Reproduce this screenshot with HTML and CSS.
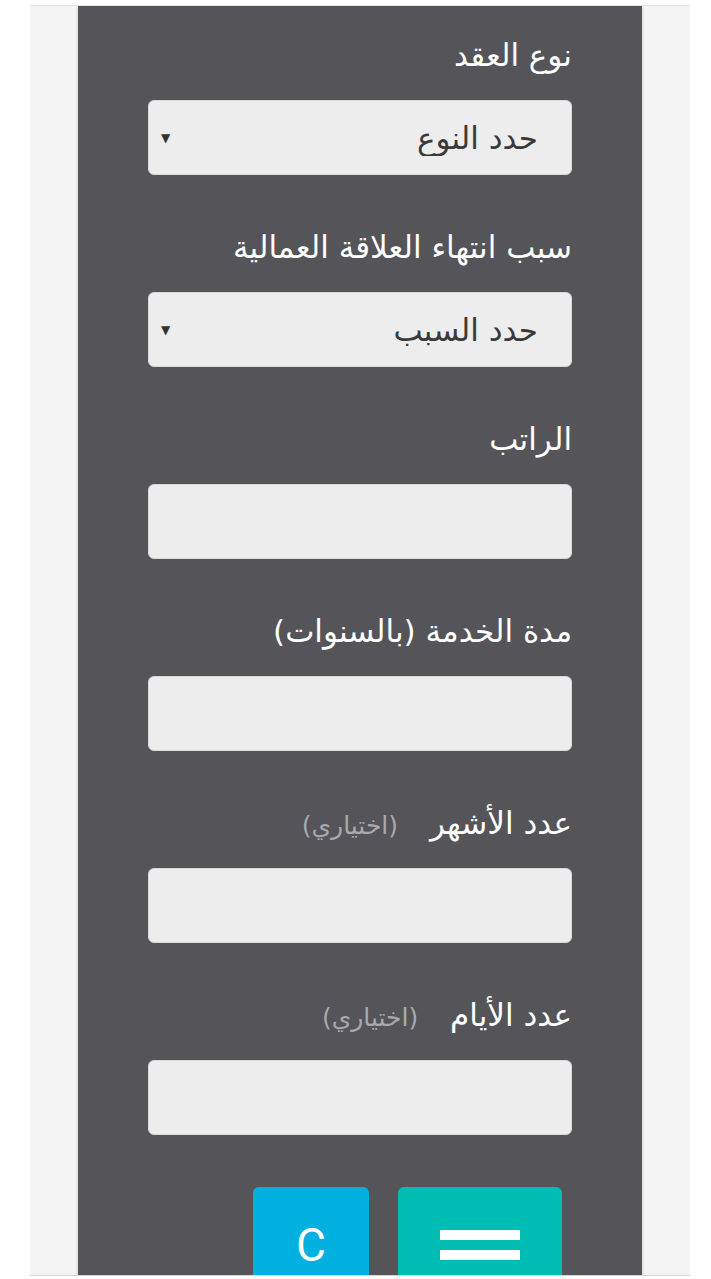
FILE: index.html
```html
<!DOCTYPE html>
<html lang="ar" dir="rtl">
<head>
    <meta charset="UTF-8">
    <meta name="viewport" content="width=device-width, initial-scale=1.0">
    <title>حاسبة مكافأة نهاية الخدمة</title>
    <link rel="stylesheet" href="styles.css">
</head>
<body>
    <div class="band">
        <div class="panel">
            <form class="calc-form" onsubmit="return false;">
                <div class="field">
                    <label for="contract-type">نوع العقد</label>
                    <div class="select-wrapper">
                        <select id="contract-type">
                            <option>حدد النوع</option>
                            <option>عقد محدد المدة</option>
                            <option>عقد غير محدد المدة</option>
                        </select>
                        <span class="arrow">▼</span>
                    </div>
                </div>

                <div class="field">
                    <label for="end-reason">سبب انتهاء العلاقة العمالية</label>
                    <div class="select-wrapper">
                        <select id="end-reason">
                            <option>حدد السبب</option>
                            <option>استقالة</option>
                            <option>إنهاء من صاحب العمل</option>
                        </select>
                        <span class="arrow">▼</span>
                    </div>
                </div>

                <div class="field">
                    <label for="salary">الراتب</label>
                    <input type="number" id="salary" inputmode="numeric">
                </div>

                <div class="field">
                    <label for="years">مدة الخدمة (بالسنوات)</label>
                    <input type="number" id="years" inputmode="numeric">
                </div>

                <div class="field">
                    <label for="months">عدد الأشهر <span class="optional">(اختياري)</span></label>
                    <input type="number" id="months" inputmode="numeric">
                </div>

                <div class="field">
                    <label for="days">عدد الأيام <span class="optional">(اختياري)</span></label>
                    <input type="number" id="days" inputmode="numeric">
                </div>

                <div class="buttons">
                    <button type="button" class="btn btn-equals" aria-label="احسب">
                        <span class="bar"></span>
                        <span class="bar"></span>
                    </button>
                    <button type="button" class="btn btn-clear">C</button>
                </div>
            </form>
        </div>
    </div>
</body>
</html>
```

FILE: styles.css
```css
html, body {
    margin: 0;
    padding: 0;
}

body {
    background: #fff;
    height: 1279px;
    overflow: hidden;
    font-family: "DejaVu Sans", "Noto Sans", sans-serif;
}

.band {
    margin: 5px auto 0 30px;
    width: 660px;
    height: 1269px;
    background: #f4f4f4;
    border-top: 1px solid #e2e2e2;
    border-bottom: 1px solid #d6d6d6;
    overflow: hidden;
}

.panel {
    margin: 0 46px;
    height: 100%;
    background: #545459;
    border-left: 2px solid #e6e6e6;
    border-right: 2px solid #e6e6e6;
    overflow: hidden;
}

.calc-form {
    padding: 29px 70px 0 70px;
}

.field {
    display: flex;
    flex-direction: column;
    margin-bottom: 52px;
}

label {
    color: #fff;
    font-size: 31px;
    line-height: 40px;
    height: 40px;
    margin-bottom: 25px;
    text-align: right;
}

.optional {
    color: #a9a9ad;
    font-size: 25px;
    line-height: 1;
    margin-right: 22px;
}

.select-wrapper {
    position: relative;
}

select,
input[type="number"] {
    width: 100%;
    height: 75px;
    box-sizing: border-box;
    background: #ededed;
    border: 1px solid #d8d8d8;
    border-radius: 6px;
    font-family: inherit;
    font-size: 31px;
    color: #3a3a3a;
    outline: none;
}

select {
    appearance: none;
    -webkit-appearance: none;
    padding: 0 33px 0 50px;
}

input[type="number"] {
    padding: 0 20px;
}

.arrow {
    position: absolute;
    left: 13px;
    top: 50%;
    transform: translateY(-50%);
    font-size: 12px;
    color: #333;
    pointer-events: none;
}

.buttons {
    display: flex;
    gap: 29px;
    padding-right: 10px;
    margin-top: 1px;
}

.btn {
    border: none;
    border-radius: 6px;
    height: 116px;
    padding: 0;
    cursor: pointer;
    color: #fff;
}

.btn-equals {
    width: 164px;
    background: #00bdb4;
    display: flex;
    flex-direction: column;
    align-items: center;
    justify-content: center;
    gap: 10px;
}

.btn-equals .bar {
    display: block;
    width: 80px;
    height: 10px;
    background: #fff;
}

.btn-clear {
    width: 116px;
    background: #03b1e0;
    font-family: Roboto, "Liberation Sans", sans-serif;
    font-size: 46px;
}
```
